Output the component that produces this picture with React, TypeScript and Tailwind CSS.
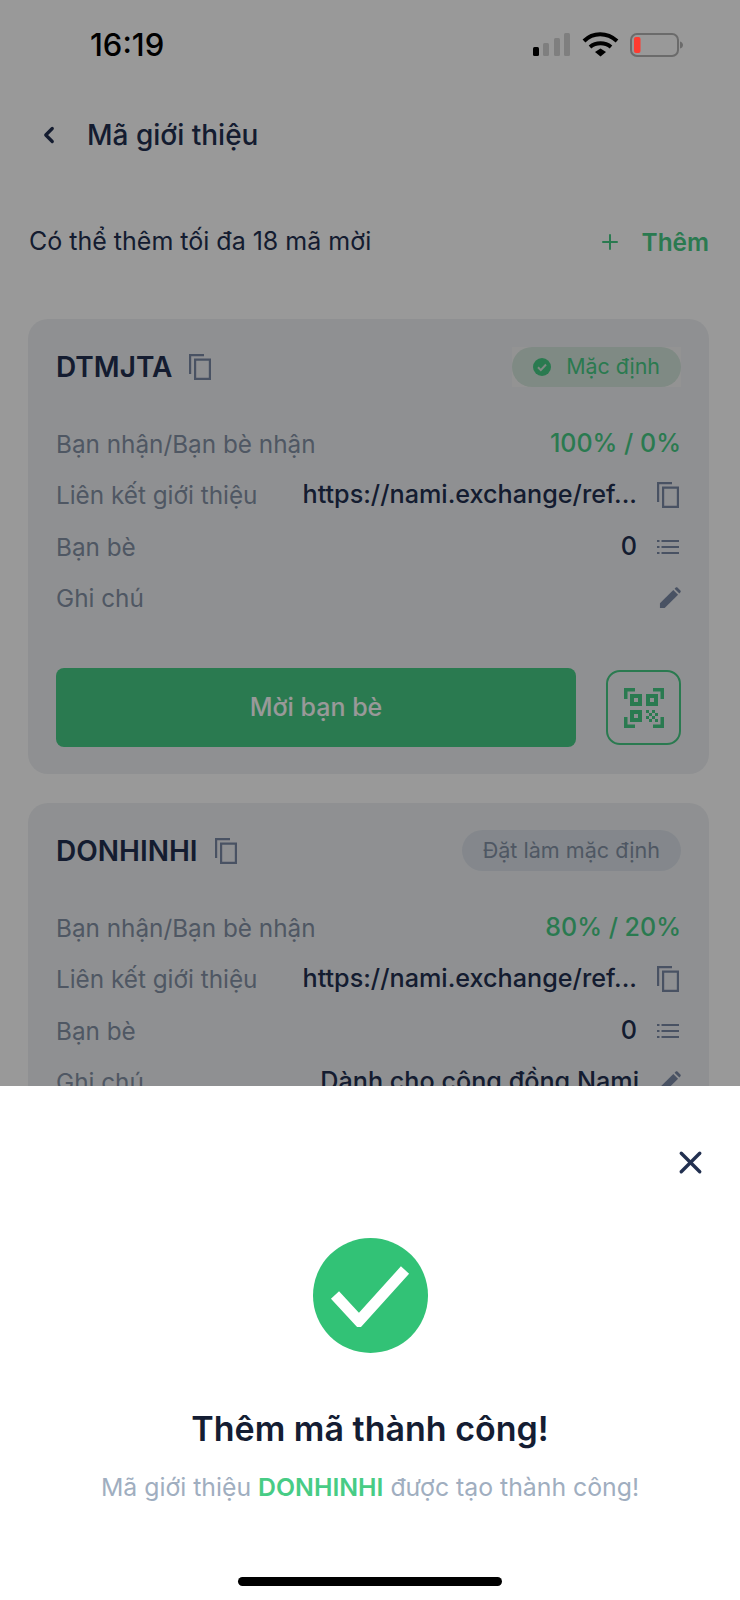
import { ChevronLeft, Plus, X } from "lucide-react";

const FONT = { fontFamily: "Inter, 'Noto Sans', sans-serif" };

function CopyIcon() {
  return (
    <svg viewBox="0 0 22 26" className="w-[22px] h-[26px]" fill="#7b89a6">
      <path d="M0 0h15v2.200H2.200V20H0z" />
      <path d="M5 4.500h17V26H5zm2.200 2.200v17.100h12.600V6.700z" fillRule="evenodd" />
    </svg>
  );
}

function ListIcon() {
  return (
    <svg viewBox="0 0 22 16" className="w-[22px] h-[16px]" fill="#7b89a6">
      <rect x="0" y="1" width="2.500" height="2" />
      <rect x="4.500" y="1" width="17.500" height="2" />
      <rect x="0" y="7" width="2.500" height="2" />
      <rect x="4.500" y="7" width="17.500" height="2" />
      <rect x="0" y="13" width="2.500" height="2" />
      <rect x="4.500" y="13" width="17.500" height="2" />
    </svg>
  );
}

function EditIcon() {
  return (
    <svg viewBox="0 0 24 24" className="w-[22px] h-[22px]" fill="#7b89a6">
      <path d="M1 23v-5.200L15.600 3.200l5.200 5.200L6.200 23z" />
      <path d="M17 1.800l1.300-1.200c.5-.5 1.300-.5 1.800 0l3.300 3.300c.5.5.5 1.300 0 1.800L22.200 7z" />
    </svg>
  );
}

function QrIcon() {
  return (
    <svg viewBox="0 0 40 40" className="w-[40px] h-[40px]" fill="#47cc85">
      <path d="M0 0h11v3.500H3.500V11H0zM29 0h11v11h-3.500V3.500H29zM0 29h3.500v7.500H11V40H0zM36.500 29H40v11H29v-3.500h7.500z" />
      <path d="M6 6h12v12H6zm4 4v4h4v-4zM22 6h12v12H22zm4 4v4h4v-4zM6 22h12v12H6zm4 4v4h4v-4z" fillRule="evenodd" />
      <path d="M22 22h3v3h-3zM28 22h3v3h-3zM25 25h3v3h-3zM31 25h3v3h-3zM22 28h3v3h-3zM28 28h3v3h-3zM25 31h3v3h-3zM31 31h3v3h-3z" />
    </svg>
  );
}

function Row({ label, children }: { label: string; children: React.ReactNode }) {
  return (
    <div className="h-[51.500px] flex items-center justify-between">
      <span className="text-[24.300px] text-[#8492a6]">{label}</span>
      <div className="flex items-center gap-[20px]">{children}</div>
    </div>
  );
}

function Value({ children }: { children: React.ReactNode }) {
  return <span className="text-[25.200px] font-medium text-[#223050]">{children}</span>;
}

function CodeCard({
  code,
  rate,
  note,
  isDefault,
}: {
  code: string;
  rate: string;
  note?: string;
  isDefault?: boolean;
}) {
  return (
    <div className="bg-[#eff1f4] rounded-[20px] px-[28px] pt-[27px] pb-[27px]">
      <div className="h-[41px] flex items-center justify-between">
        <div className="flex items-center gap-[17px]">
          <span className="text-[28px] font-semibold text-[#223050]">{code}</span>
          <CopyIcon />
        </div>
        {isDefault ? (
          <div className="bg-[#f6f6f6]">
            <div className="h-[40px] bg-[#d4e6dc] rounded-full px-[21px] flex items-center gap-[15px]">
              <svg viewBox="0 0 18 18" className="w-[18px] h-[18px]">
                <circle cx="9" cy="9" r="9" fill="#47cc85" />
                <path d="M5 9.300l2.800 2.800L13 6.500" stroke="#d4e6dc" strokeWidth="2" fill="none" />
              </svg>
              <span className="text-[21.400px] text-[#47cc85]">Mặc định</span>
            </div>
          </div>
        ) : (
          <div className="h-[41px] bg-[#dce2ea] rounded-full px-[21px] flex items-center">
            <span className="text-[21.600px] text-[#8492a6]">Đặt làm mặc định</span>
          </div>
        )}
      </div>
      <div className="mt-[31px]">
        <Row label="Bạn nhận/Bạn bè nhận">
          <span className="text-[25px] font-medium text-[#47cc85]">{rate}</span>
        </Row>
        <Row label="Liên kết giới thiệu">
          <Value>https://nami.exchange/ref...</Value>
          <span className="mr-[2px]">
            <CopyIcon />
          </span>
        </Row>
        <Row label="Bạn bè">
          <Value>0</Value>
          <span className="mr-[2px]">
            <ListIcon />
          </span>
        </Row>
        <Row label="Ghi chú">
          {note && <Value>{note}</Value>}
          <EditIcon />
        </Row>
      </div>
      <div className="mt-[44px] flex items-center justify-between">
        <button className="w-[520px] h-[79px] bg-[#47cc85] rounded-[8px] text-white text-[25px] font-medium">
          Mời bạn bè
        </button>
        <button className="w-[75px] h-[75px] border-2 border-[#47cc85] rounded-[14px] flex items-center justify-center">
          <QrIcon />
        </button>
      </div>
    </div>
  );
}

export default function App() {
  return (
    <div className="relative w-[740px] h-[1600px] overflow-hidden bg-white" style={FONT}>
      {/* trang phía sau */}
      <div className="h-[88px]" />
      <div className="h-[94px] flex items-center pl-[36px] gap-[25px]">
        <ChevronLeft className="w-[26px] h-[26px] text-[#223050]" strokeWidth={3} />
        <span className="text-[28px] font-medium text-[#223050]">Mã giới thiệu</span>
      </div>
      <div className="mt-[24px] h-[72px] flex items-center justify-between pl-[29px] pr-[31px]">
        <span className="text-[25px] text-[#223050]">Có thể thêm tối đa 18 mã mời</span>
        <div className="flex items-center gap-[20px]">
          <Plus className="w-[24px] h-[24px] text-[#47cc85]" strokeWidth={2} />
          <span className="text-[24.400px] font-semibold text-[#47cc85]">Thêm</span>
        </div>
      </div>
      <div className="mt-[41px] ml-[28px] mr-[31px] flex flex-col gap-[29px]">
        <CodeCard code="DTMJTA" rate="100% / 0%" isDefault />
        <CodeCard code="DONHINHI" rate="80% / 20%" note="Dành cho cộng đồng Nami" />
      </div>

      {/* lớp phủ */}
      <div className="absolute inset-0 bg-black/40" />

      {/* thanh trạng thái */}
      <div className="absolute top-0 left-0 right-0 h-[88px] flex items-center justify-between pl-[90px] pr-[56px]">
        <span className="text-[31px] font-medium text-black leading-none">16:19</span>
        <svg viewBox="0 0 151 25" className="w-[151px] h-[25px]">
          <rect x="0" y="15" width="6" height="9" rx="1.500" fill="#000" />
          <rect x="10" y="11" width="6" height="13" rx="1.500" fill="#7f7f7f" />
          <rect x="21" y="6" width="6" height="18" rx="1.500" fill="#7f7f7f" />
          <rect x="31" y="1" width="6" height="23" rx="1.500" fill="#7f7f7f" />
          <path d="M51 9c9-9 23-9 33 0" stroke="#000" strokeWidth="4" fill="none" />
          <path d="M57 15c6-5 15-5 21 0" stroke="#000" strokeWidth="4" fill="none" />
          <path d="M62 20l5.500-3.500L73 20l-5.500 4.500z" fill="#000" />
          <rect x="98" y="2" width="47" height="22" rx="6" fill="none" stroke="#6b6b6b" strokeWidth="2" />
          <rect x="101" y="5" width="6.500" height="16" rx="2" fill="#ff3b30" />
          <path d="M147 9.500c2 .5 3 2 3 3.500s-1 3-3 3.500z" fill="#6b6b6b" />
        </svg>
      </div>

      {/* bottom sheet */}
      <div className="absolute left-0 right-0 bottom-0 h-[514px] bg-white flex flex-col items-center">
        <div className="self-stretch flex justify-end pr-[31px] pt-[58px]">
          <X className="w-[37px] h-[37px] text-[#223050]" strokeWidth={2.200} />
        </div>
        <div className="mt-[57px] w-[115px] h-[115px] rounded-full bg-[#32c276] flex items-center justify-center">
          <svg viewBox="0 0 80 62" className="w-[80px] h-[62px]">
            <path d="M5 30l24 26L75 5" stroke="#fff" strokeWidth="11" fill="none" />
          </svg>
        </div>
        <div className="mt-[56px] text-[34px] leading-[40px] font-semibold text-[#141d33]">Thêm mã thành công!</div>
        <div className="mt-[23px] text-[24.800px] leading-[30px] text-[#a0aec0]">
          Mã giới thiệu <span className="font-semibold text-[#47cc85]">DONHINHI</span> được tạo thành công!
        </div>
        <div className="absolute left-[238px] bottom-[14px] w-[264px] h-[9px] rounded-full bg-black" />
      </div>
    </div>
  );
}
